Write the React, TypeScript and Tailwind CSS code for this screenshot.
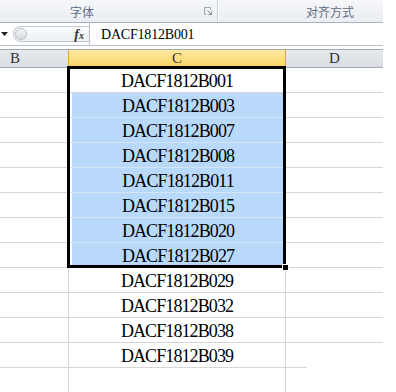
import React from "react";

// row values shown in column C
const CODES = ["001", "003", "007", "008", "011", "015", "020", "027", "029", "032", "038", "039"];

const SERIF = "font-['Liberation_Serif',serif]";
const CJK = "font-['Noto_Sans_CJK_SC','Noto_Sans',sans-serif]";

function Launcher() {
  return (
    <svg width="9" height="9" viewBox="0 0 9 9" className="mt-[1px]">
      <path d="M0.5 0.5h6v2M0.5 0.5v7h2" stroke="#9aa3ae" fill="none" />
      <path d="M3.5 3.5l3.5 3.5M7.5 4.5v3h-3" stroke="#7d8794" fill="none" />
    </svg>
  );
}

function Ribbon() {
  return (
    <div className="flex h-[23px] border-b border-[#a9b2be] bg-gradient-to-b from-[#f6f7f9] to-[#eaedf1]">
      <div className={`flex w-[218px] items-center border-r border-[#c9d0d8] pl-[70px] pr-[4px] text-[12px] text-[#5d6d87] ${CJK}`}>
        <span className="pt-[1px]">字体</span>
        <span className="ml-auto">
          <Launcher />
        </span>
      </div>
      <div className={`flex flex-1 items-center border-l border-white pl-[87px] text-[12px] text-[#5d6d87] ${CJK}`}>
        <span className="pt-[1px]">对齐方式</span>
      </div>
    </div>
  );
}

function FormulaBar() {
  return (
    <div className="flex h-[23px] border-b border-[#b8bfc8] bg-white">
      <div className="flex w-[13px] items-center pl-[1px] pt-[1px]">
        <svg width="8" height="5" viewBox="0 0 8 5">
          <path d="M0 0h7l-3.5 4z" fill="#222" />
        </svg>
      </div>
      <div className="my-[3px] flex w-[76px] items-center rounded-l-full border border-r-0 border-[#c3c9d1] bg-gradient-to-b from-[#fbfcfd] to-[#eceff3]">
        <div className="ml-[1px] h-[12px] w-[12px] rounded-full border border-[#b9c0c9] bg-gradient-to-b from-[#f4f5f7] to-[#d6dbe1]" />
        <span className={`ml-auto mr-[5px] text-[14px] font-bold italic text-[#333] ${SERIF}`}>
          f<span className="text-[10px]">x</span>
        </span>
      </div>
      <div className={`flex-1 border-l border-[#b8bfc8] pl-[11px] pt-[3px] text-[14px] leading-[18px] tracking-[-0.2px] text-black ${SERIF}`}>
        DACF1812B001
      </div>
    </div>
  );
}

function ColumnHeaders() {
  return (
    <div className={`mt-[3px] flex h-[19px] border-y border-[#a1aab4] text-[15px] leading-[17px] text-[#333] ${SERIF}`}>
      <div className="w-[68px] bg-gradient-to-b from-[#e6e9ed] to-[#dadee4] pl-[10px]">B</div>
      <div className="w-[218px] border-x border-[#e2a33c] bg-gradient-to-b from-[#fee8a0] to-[#f9d463] text-center">C</div>
      <div className="w-[97px] bg-gradient-to-b from-[#e6e9ed] to-[#dadee4] text-center">D</div>
    </div>
  );
}

function Row({ code, index }: { code: string; index: number }) {
  const selected = index >= 1 && index <= 7;
  const last = index === CODES.length - 1;
  return (
    <div className="flex h-[25px]">
      <div className="w-[69px] border-b border-r border-[#d6d6d6]" />
      <div
        className={`w-[217px] border-r border-[#d6d6d6] ${selected && index < 7 ? "border-b-[#d4e5f7]" : ""} border-b ${SERIF} text-center text-[18px] leading-[26px] tracking-[-0.9px] text-black`}
      >
        <div className={`h-[24px] ${selected ? "ml-[3px] mr-[1px] bg-[#b8d9fa]" : ""}`}>DACF1812B{code}</div>
      </div>
      {last ? (
        <div className="w-[97px]">
          <div className="h-[25px] w-[21px] border-b border-[#d6d6d6]" />
        </div>
      ) : (
        <div className="w-[97px] border-b border-[#d6d6d6]" />
      )}
    </div>
  );
}

export default function App() {
  return (
    <div className="h-[392px] w-[396px] overflow-hidden bg-white">
      <div className="w-[383px]">
        <Ribbon />
        <FormulaBar />
        <ColumnHeaders />
        <div className="relative">
          {CODES.map((c, i) => (
            <Row key={c} code={c} index={i} />
          ))}
          <div className="flex h-[25px]">
            <div className="w-[69px] border-r border-[#d6d6d6]" />
            <div className="w-[217px] border-r border-[#d6d6d6]" />
          </div>

          {/* selection frame + fill handle */}
          <div className="pointer-events-none absolute left-[67px] top-[-2px] h-[202px] w-[219px] border-[3px] border-black" />
          <div className="pointer-events-none absolute left-[282px] top-[196px] h-[7px] w-[7px] border border-white bg-black" />
        </div>
      </div>
    </div>
  );
}
